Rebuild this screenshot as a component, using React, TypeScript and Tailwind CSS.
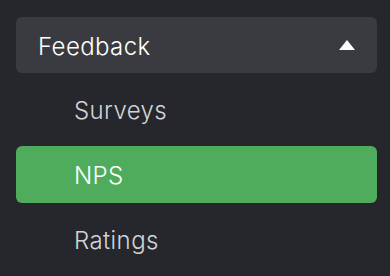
import { useState } from "react";

const items = ["Surveys", "NPS", "Ratings"];

export default function App() {
	const [active, setActive] = useState("NPS");
	return (
		<div className="h-[276px] w-[390px] bg-[#25272c] pl-4 pr-[13px] pt-[17px] font-['Inter',sans-serif]">
			<button className="flex h-14 w-full items-center justify-between rounded-md bg-[#3a3b40] pl-[22px] pr-[22px] pt-[3px] text-[24px] font-light tracking-[0.4px] text-white">
				<span>Feedback</span>
				<svg width="16" height="10" viewBox="0 0 16 10" className="-mt-[3px]">
					<path d="M8 0L16 10H0Z" fill="#fff" />
				</svg>
			</button>
			<ul className="mt-2 flex flex-col gap-2">
				{items.map((item) => (
					<li key={item}>
						<button
							onClick={() => setActive(item)}
							className={
								item === active
									? "flex h-[57px] w-full items-center rounded-md bg-[#4fac5c] pl-[58px] pt-[2px] text-[24px] font-light tracking-[0.4px] text-white"
									: "flex h-[57px] w-full items-center rounded-md pl-[58px] pt-[2px] text-[24px] font-light tracking-[0.4px] text-[#d4d4d6]"
							}
						>
							{item}
						</button>
					</li>
				))}
			</ul>
		</div>
	);
}
